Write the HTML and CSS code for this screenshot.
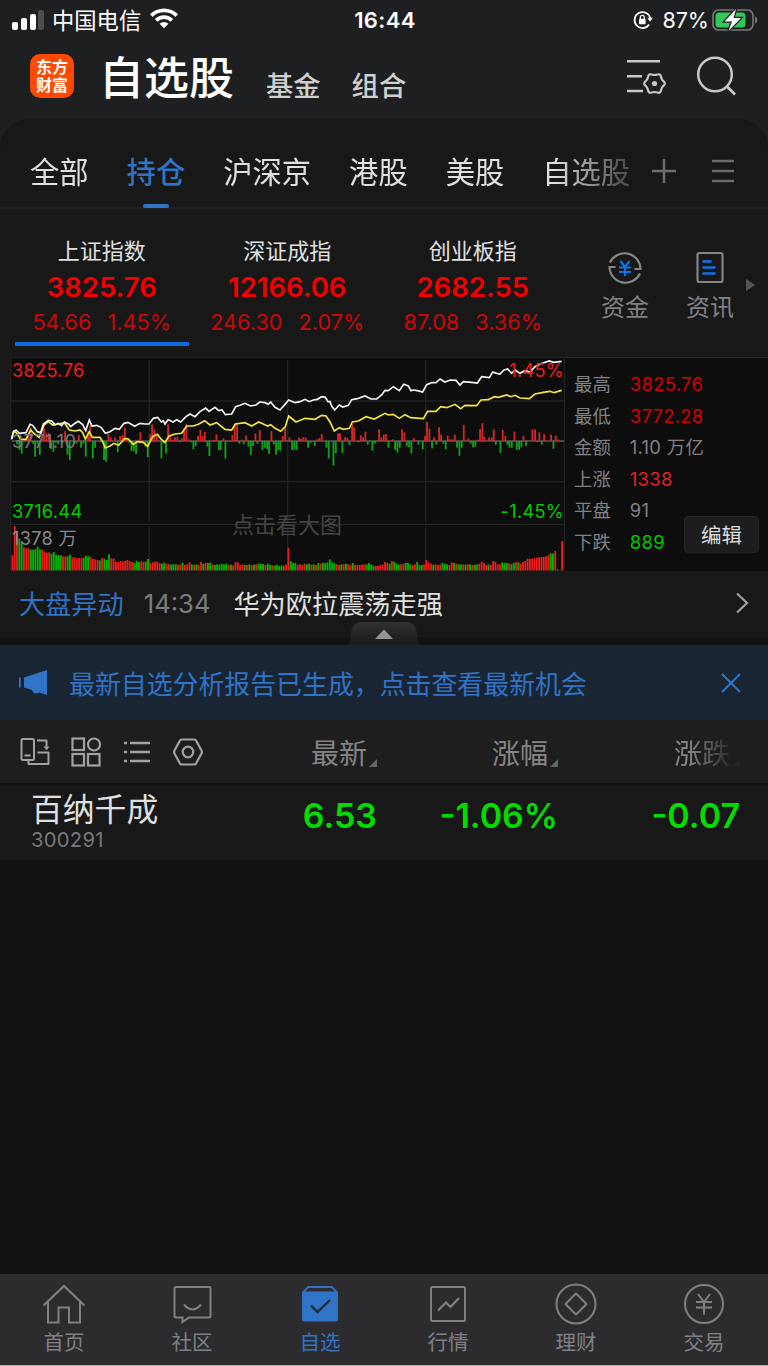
FILE: index.html
```html
<!DOCTYPE html>
<html lang="zh-CN">
<head>
    <meta charset="UTF-8">
    <meta name="viewport" content="width=device-width, initial-scale=1.0">
    <title>自选股</title>
    <link rel="stylesheet" href="styles.css">
</head>
<body>
    <!-- Status bar -->
    <div class="status-bar">
        <div class="status-left">
            <svg class="signal" width="32" height="20" viewBox="0 0 32 20">
                <rect x="0" y="12" width="6" height="8" rx="2" fill="#fff"/>
                <rect x="9" y="8" width="6" height="12" rx="2" fill="#fff"/>
                <rect x="18" y="4" width="6" height="16" rx="2" fill="#fff"/>
                <rect x="26" y="0" width="6" height="20" rx="2" fill="#4c4d4f"/>
            </svg>
            <span class="carrier">中国电信</span>
            <svg class="wifi" width="28" height="21" viewBox="0 0 28 21">
                <path d="M0 6.200a19.800 19.800 0 0 1 28 0l-2.600 2.700a16 16 0 0 0-22.800 0z" fill="#fff"/>
                <path d="M4.800 11a13 13 0 0 1 18.400 0l-2.700 2.700a9.200 9.200 0 0 0-13 0z" fill="#fff"/>
                <path d="M9.500 15.800a6.300 6.300 0 0 1 9 0L14 20.300z" fill="#fff"/>
            </svg>
        </div>
        <span class="clock">16:44</span>
        <div class="status-right">
            <svg width="20" height="20" viewBox="0 0 20 20">
                <path d="M16.200 14.600A8 8 0 1 1 17.300 8" fill="none" stroke="#fff" stroke-width="1.700"/>
                <path d="M14.300 7.800h5.500L17 11.800z" fill="#fff"/>
                <rect x="6" y="8.800" width="6.600" height="5.400" rx="1" fill="#fff"/>
                <path d="M7.300 9V7.300a2 2 0 0 1 4 0V9" fill="none" stroke="#fff" stroke-width="1.200"/>
            </svg>
            <span class="percent">87%</span>
            <svg width="46" height="24" viewBox="0 0 46 24">
                <rect x="1" y="2" width="40" height="20" rx="5.500" fill="none" stroke="#77787a" stroke-width="1.600"/>
                <path d="M43 8.500c3 1 3 6 0 7z" fill="#77787a"/>
                <rect x="3.500" y="4.500" width="30" height="15" rx="3.500" fill="#33c758"/>
                <path d="M24 1L12.500 13.500H20L16.500 23 29 10H21.500z" fill="#fff" stroke="#1e1f21" stroke-width="2.500" paint-order="stroke"/>
            </svg>
        </div>
    </div>

    <!-- App header -->
    <header class="header">
        <div class="logo"><span>东方</span><span>财富</span></div>
        <h1>自选股</h1>
        <span class="header-link">基金</span>
        <span class="header-link">组合</span>
        <svg class="header-settings" width="40" height="36" viewBox="0 0 40 36">
            <path d="M1 3.300h33M1 18.300h15M1 33h16" fill="none" stroke="#c8c8c8" stroke-width="2.500"/>
            <path transform="translate(0 2)" d="M37.700 25.500Q35.400 27.500 34.900 30.500 34.300 33.500 31.400 32.500 28.500 31.500 25.600 32.500 22.700 33.500 22.200 30.500 21.600 27.500 19.300 25.500 17 23.500 19.300 21.500 21.600 19.500 22.200 16.500 22.700 13.500 25.600 14.500 28.500 15.500 31.400 14.500 34.300 13.500 34.900 16.500 35.400 19.500 37.700 21.500 40 23.500 37.700 25.500z" fill="none" stroke="#c8c8c8" stroke-width="2.200"/>
            <circle cx="28.500" cy="25.500" r="2.600" fill="#c8c8c8"/>
        </svg>
        <svg class="header-search" width="42" height="42" viewBox="0 0 42 42">
            <circle cx="19" cy="18.500" r="16.800" fill="none" stroke="#c8c8c8" stroke-width="2.500"/>
            <path d="M31 30.500l8 8" stroke="#c8c8c8" stroke-width="2.800"/>
        </svg>
    </header>

    <main class="panel">
        <!-- Group tabs -->
        <nav class="tabs">
            <div class="tab-list">
                <span class="tab">全部</span>
                <span class="tab active">持仓</span>
                <span class="tab">沪深京</span>
                <span class="tab">港股</span>
                <span class="tab">美股</span>
                <span class="tab">自选股</span>
            </div>
            <svg width="26" height="26" viewBox="0 0 26 26"><path d="M13 2v24M1 14h24" stroke="#6b6b6b" stroke-width="2.500"/></svg>
            <svg class="tab-menu" width="24" height="26" viewBox="0 0 24 26"><path d="M1 4h22M1 14h22M1 24h22" stroke="#6b6b6b" stroke-width="2.500"/></svg>
        </nav>

        <!-- Market indices -->
        <section class="indices">
            <div class="index selected">
                <div class="index-name">上证指数</div>
                <div class="index-value">3825.76</div>
                <div class="index-change"><span>54.66</span><span>1.45%</span></div>
            </div>
            <div class="index">
                <div class="index-name">深证成指</div>
                <div class="index-value">12166.06</div>
                <div class="index-change"><span>246.30</span><span>2.07%</span></div>
            </div>
            <div class="index">
                <div class="index-name">创业板指</div>
                <div class="index-value">2682.55</div>
                <div class="index-change"><span>87.08</span><span>3.36%</span></div>
            </div>
            <div class="shortcut">
                <svg width="36" height="36" viewBox="0 0 36 36">
                    <path d="M3 12.500A16 16 0 0 1 33.500 19h-6M33 23.500A16 16 0 0 1 2.500 17h6" fill="none" stroke="#858585" stroke-width="2.200"/>
                    <path d="M13.500 11l4.500 6L22.500 11M18 16.500V26M12 17.500h12M12 22h12" fill="none" stroke="#0f72e5" stroke-width="2.100"/>
                </svg>
                <span>资金</span>
            </div>
            <div class="shortcut">
                <svg width="36" height="36" viewBox="0 0 36 36">
                    <rect x="5.500" y="3" width="25" height="29" rx="2" fill="none" stroke="#858585" stroke-width="2.200"/>
                    <path d="M10.500 11.500h9M10.500 17.500h13M10.500 23.500h13" stroke="#0f72e5" stroke-width="2.400"/>
                </svg>
                <span>资讯</span>
            </div>
            <span class="more-arrow"></span>
        </section>

        <!-- Intraday chart -->
        <section class="market">
            <div class="chart">
                <svg id="chart" viewBox="30 21 1665 642" preserveAspectRatio="none"></svg>
                <span class="label high">3825.76</span>
                <span class="label middle">3771.10</span>
                <span class="label low">3716.44</span>
                <span class="label volume">1378 万</span>
                <span class="label high-percent">1.45%</span>
                <span class="label low-percent">-1.45%</span>
                <span class="label hint">点击看大图</span>
            </div>
            <div class="stats">
                <div class="stat"><span>最高</span><b class="dark-red">3825.76</b></div>
                <div class="stat"><span>最低</span><b class="dark-red">3772.28</b></div>
                <div class="stat"><span>金额</span><b>1.10 万亿</b></div>
                <div class="stat"><span>上涨</span><b class="red">1338</b></div>
                <div class="stat"><span>平盘</span><b>91</b></div>
                <div class="stat"><span>下跌</span><b class="green">889</b></div>
                <button class="edit-button">编辑</button>
            </div>
        </section>

        <!-- News line -->
        <section class="news">
            <span class="news-tag">大盘异动</span>
            <span class="news-time">14:34</span>
            <span class="news-title">华为欧拉震荡走强</span>
            <svg width="14" height="22" viewBox="0 0 14 22"><path d="M2 1.500l10 9.500L2 20.500" fill="none" stroke="#a0a0a0" stroke-width="2.200"/></svg>
            <svg class="collapse" width="70" height="23" viewBox="0 0 70 23">
                <defs>
                    <linearGradient id="handle" x1="0" y1="0" x2="0" y2="1">
                        <stop offset="0" stop-color="#303030"/>
                        <stop offset="1" stop-color="#191919"/>
                    </linearGradient>
                </defs>
                <path d="M0 23Q2 18 2 11 3 0 13 0H57Q67 0 68 11 68 18 70 23z" fill="url(#handle)"/>
                <path d="M26 17L34 8.500q1-1 2 0L44 17z" fill="#969696"/>
            </svg>
        </section>

        <section class="banner">
            <svg width="29" height="26" viewBox="0 0 29 26">
                <path d="M.800 7.500v10" stroke="#2f74c6" stroke-width="1.800"/>
                <path d="M5 7.500L28 0v25l-8-2.500q-5 3-7-2.500l-3-1-5-1.500z" fill="#2f74c6"/>
            </svg>
            <span>最新自选分析报告已生成，点击查看最新机会</span>
            <svg class="banner-close" width="20" height="20" viewBox="0 0 20 20"><path d="M1 1l18 18M19 1L1 19" stroke="#2f74c6" stroke-width="2"/></svg>
        </section>

        <!-- Stock list -->
        <section class="stock-grid list-head">
            <div class="tools">
                <svg width="30" height="30" viewBox="0 0 30 30" fill="none" stroke="#a2a2a2" stroke-width="2">
                    <rect x="1.500" y="2" width="12.500" height="21" rx="1.500"/>
                    <path d="M4.500 18.500h6M17 3.500h9.500v9M8.500 23v4h20V15.500H17.500" stroke-linejoin="round"/>
                    <path d="M23.500 9.500l3 3.500 3-3.500" fill="#a2a2a2" stroke="none"/>
                </svg>
                <svg width="30" height="30" viewBox="0 0 30 30" fill="none" stroke="#a2a2a2" stroke-width="2.200">
                    <rect x="1.500" y="1.500" width="11.500" height="11.500"/>
                    <circle cx="23" cy="7.500" r="6"/>
                    <rect x="1.500" y="17" width="11.500" height="11.500"/>
                    <rect x="17" y="17" width="11.500" height="11.500"/>
                </svg>
                <svg width="30" height="30" viewBox="0 0 30 30" fill="none" stroke="#a2a2a2" stroke-width="2.500">
                    <path d="M2 6h3M8 6h20M2 15h3M8 15h20M2 24h3M8 24h20"/>
                </svg>
                <svg width="30" height="30" viewBox="0 0 30 30" fill="none" stroke="#a2a2a2" stroke-width="2.200" stroke-linejoin="round">
                    <path d="M8.500 2.500h13q1 0 1.500 1l5.500 10q.8 1.500 0 3L23 26.500q-.5 1-1.500 1h-13q-1 0-1.500-1l-5.500-10q-.8-1.500 0-3L7 3.500q.5-1 1.500-1z"/>
                    <circle cx="15" cy="15" r="5.300"/>
                </svg>
            </div>
            <div class="column-title">最新<i></i></div>
            <div class="column-title">涨幅<i></i></div>
            <div class="column-title faded">涨跌<i></i></div>
        </section>
        <section class="stock-grid stock">
            <div class="stock-name">
                <div class="name">百纳千成</div>
                <div class="code">300291</div>
            </div>
            <div class="number">6.53</div>
            <div class="number">-1.06%</div>
            <div class="number">-0.07</div>
        </section>
    </main>

    <!-- Bottom navigation -->
    <nav class="bottom-nav">
        <div class="nav-item">
            <svg width="44" height="44" viewBox="0 0 44 44"><path d="M1.500 23.500L22 4l20.500 19.500M6 20v20.500h10.500v-15h10.500v15H38V20" fill="none" stroke="#808085" stroke-width="2"/></svg>
            <span>首页</span>
        </div>
        <div class="nav-item">
            <svg width="44" height="44" viewBox="0 0 44 44"><path d="M6 5h33q1.500 0 1.500 1.500V34q0 1.500-1.500 1.500H19L12.500 40v-4.500H6q-1.500 0-1.500-1.500V6.500Q4.500 5 6 5zM14 22.500q8.500 10 17 0" fill="none" stroke="#808085" stroke-width="2"/></svg>
            <span>社区</span>
        </div>
        <div class="nav-item current">
            <svg width="44" height="44" viewBox="0 0 44 44">
                <path d="M10 4h24l6 6v27q0 2.500-2.500 2.500h-31Q4 39.500 4 37V10z" fill="#2f74c6"/>
                <path d="M10.500 6h23l3 3.500h-29z" fill="#2c2c2e"/>
                <path d="M13 23.500l6.500 6.500L32 18" fill="none" stroke="#202a38" stroke-width="2.400"/>
            </svg>
            <span>自选</span>
        </div>
        <div class="nav-item">
            <svg width="44" height="44" viewBox="0 0 44 44"><rect x="5" y="5" width="34" height="34" rx="1.500" fill="none" stroke="#808085" stroke-width="2"/><path d="M12 28.500l8-8 4.500 4.500L33 16" fill="none" stroke="#808085" stroke-width="2.200"/></svg>
            <span>行情</span>
        </div>
        <div class="nav-item">
            <svg width="44" height="44" viewBox="0 0 44 44"><circle cx="22" cy="22" r="19.500" fill="none" stroke="#808085" stroke-width="2"/><path d="M22 11.500L32.500 22 22 32.500 11.500 22z" fill="none" stroke="#808085" stroke-width="2" stroke-linejoin="round"/></svg>
            <span>理财</span>
        </div>
        <div class="nav-item">
            <svg width="44" height="44" viewBox="0 0 44 44"><circle cx="22" cy="22" r="19" fill="none" stroke="#808085" stroke-width="2"/><path d="M16 12l6 8 6-8M22 20v12.500M14 20h16M14 25.500h16" fill="none" stroke="#808085" stroke-width="2"/></svg>
            <span>交易</span>
        </div>
    </nav>
    <script src="script.js"></script>
</body>
</html>
```

FILE: styles.css
```css
* {
    box-sizing: border-box;
}
body {
    margin: 0;
    width: 768px;
    height: 1366px;
    overflow: hidden;
    display: flex;
    flex-direction: column;
    background-color: #1e1f21;
    color: #e0e0e0;
    font-family: Inter, "Noto Sans CJK SC", sans-serif;
    white-space: nowrap;
}
svg {
    display: block;
    flex-shrink: 0;
}

/* Status bar */
.status-bar {
    height: 39px;
    padding: 0 10px 0 12px;
    display: grid;
    grid-template-columns: 1fr auto 1fr;
    align-items: center;
    color: #fff;
}
.status-left, .status-right {
    display: flex;
    align-items: center;
}
.status-right {
    justify-content: flex-end;
}
.wifi {
    margin-bottom: 2px;
}
.carrier {
    margin: -2px 9px 0 8px;
    font-size: 22.3px;
}
.clock {
    font-size: 22px;
    font-weight: 600;
    letter-spacing: 0.4px;
}
.percent {
    margin: 0 3px 0 9px;
    font-size: 21.5px;
}

/* Header */
.header {
    height: 80px;
    padding: 1px 30px 0 30px;
    display: flex;
    align-items: flex-start;
}
.logo {
    width: 44px;
    height: 44px;
    margin-top: 14px;
    padding-top: 4px;
    border-radius: 10px;
    background-color: #ff4800;
    color: #fff;
    font-size: 16px;
    font-weight: 700;
    line-height: 18px;
    display: flex;
    flex-direction: column;
    align-items: center;
}
h1 {
    margin: 6px 32px 0 25px;
    font-size: 45px;
    font-weight: 500;
    line-height: 66px;
    color: #fff;
}
.header-link {
    margin: 25px 31px 0 0;
    font-size: 27.3px;
    font-weight: 500;
    line-height: 44px;
    color: #cfcfcf;
}
.header-settings {
    margin: 18px 30px 0 auto;
}
.header-search {
    margin-top: 16px;
}

/* Main panel */
.panel {
    flex: 1;
    border-radius: 30px 30px 0 0;
    background-color: #121212;
    overflow: hidden;
}
.tabs {
    height: 90px;
    padding: 14px 33px 0 30px;
    display: flex;
    align-items: center;
    background-color: #181818;
    border-bottom: 2px solid #222;
}
.tab-list {
    width: 603px;
    height: 76px;
    margin-right: 18px;
    display: flex;
    gap: 38px;
    -webkit-mask-image: linear-gradient(to right, #000 87%, rgba(0, 0, 0, 0.3) 98%);
    mask-image: linear-gradient(to right, #000 87%, rgba(0, 0, 0, 0.3) 98%);
}
.tab {
    flex-shrink: 0;
    font-size: 29.3px;
    line-height: 81px;
}
.tab.active {
    display: flex;
    flex-direction: column;
    align-items: center;
    color: #2f74c6;
    font-weight: 500;
}
.tab.active::after {
    content: "";
    width: 26px;
    height: 4px;
    margin-top: -9px;
    border-radius: 2px;
    background-color: #2f74c6;
}
.tab-menu {
    margin-left: 34px;
}

/* Indices */
.indices {
    height: 148px;
    padding-left: 9px;
    display: flex;
    background-color: #181818;
}
.index {
    width: 185.500px;
    padding: 26px 6px 0;
    display: flex;
    flex-direction: column;
    align-items: center;
}
.index-name {
    font-size: 22px;
    line-height: 32px;
}
.index-value {
    margin-top: 2px;
    font-size: 27.5px;
    font-weight: 600;
    line-height: 36px;
    color: #f00000;
}
.index-change {
    margin-top: 1px;
    display: flex;
    gap: 16px;
    font-size: 21.7px;
    line-height: 32px;
    color: #c90808;
}
.index.selected::after {
    content: "";
    align-self: stretch;
    height: 4px;
    margin-top: 4px;
    background-color: #0f6fe0;
}
.shortcut {
    width: 85px;
    padding-top: 41px;
    display: flex;
    flex-direction: column;
    align-items: center;
    font-size: 24px;
    line-height: 43px;
    color: #808085;
}
.shortcut:nth-of-type(4) {
    margin-left: 17px;
}
.more-arrow {
    margin: 70px 0 0 -7px;
    height: 12px;
    border: 6px solid transparent;
    border-left: 9px solid #555;
    border-right: 0;
}

/* Chart */
.market {
    height: 214px;
    padding-left: 10px;
    display: flex;
    background-color: #181818;
}
.chart {
    position: relative;
    width: 555px;
    height: 214px;
    background-color: #0d0d0d;
}
.chart svg {
    width: 555px;
    height: 214px;
}
.label {
    position: absolute;
    font-size: 18.2px;
    line-height: 24px;
    letter-spacing: 0.3px;
}
.high {
    left: 2px;
    top: 1px;
    color: #ee1c1c;
}
.middle {
    left: 2px;
    top: 72px;
    color: #77787c;
}
.low {
    left: 2px;
    top: 142px;
    color: #00cc00;
}
.volume {
    left: 2px;
    top: 169px;
    color: #88888c;
}
.high-percent {
    right: 1px;
    top: 1px;
    color: #ee1c1c;
}
.low-percent {
    right: 1px;
    top: 142px;
    color: #00cc00;
}
.hint {
    left: 222px;
    top: 153px;
    font-size: 22px;
    line-height: 30px;
    letter-spacing: 0;
    color: #444446;
}
.stats {
    position: relative;
    flex: 1;
    padding: 11px 0 0 9px;
    background-color: #0d0d0d;
    border-top: 1px solid #292929;
}
.stat {
    display: flex;
    gap: 19px;
    font-size: 18.4px;
    line-height: 31.600px;
    color: #808085;
}
.stat b {
    font-weight: 400;
    letter-spacing: 0.3px;
}
.stat .dark-red {
    color: #d40000;
}
.stat .red {
    color: #e02020;
}
.stat .green {
    color: #00c400;
}
.edit-button {
    position: absolute;
    right: 9px;
    bottom: 18px;
    width: 75px;
    height: 37px;
    padding: 0 0 2px;
    border: 1px solid #242424;
    border-radius: 4px;
    background-color: #1d1d1d;
    color: #ddd;
    font-family: inherit;
    font-size: 20.500px;
}

/* News */
.news {
    position: relative;
    height: 74px;
    padding: 0 19px 2px;
    display: flex;
    align-items: center;
    font-size: 26.200px;
    background-color: #181818;
    border-bottom: 8px solid #121212;
}
.news-tag {
    color: #2f74c6;
}
.news-time {
    margin: 0 23px 0 20px;
    font-size: 25.6px;
    color: #7c7c80;
}
.news-title {
    margin-right: auto;
}
.collapse {
    position: absolute;
    left: 349px;
    top: 51px;
}
.banner {
    height: 75px;
    padding: 0 27px 0 19px;
    display: flex;
    align-items: center;
    font-size: 25.900px;
    background-color: #1a2533;
    color: #2f74c6;
}
.banner span {
    margin: 0 0 0 21px;
}
.banner-close {
    margin-left: auto;
}

/* Stock list */
.stock-grid {
    display: grid;
    grid-template-columns: 196px 181px 181px 182px;
}
.list-head {
    height: 65px;
    align-items: center;
    background-color: #1e1e1e;
    border-bottom: 2px solid #121212;
}
.tools {
    display: flex;
    gap: 21px;
    padding-left: 20px;
}
.column-title {
    padding-top: 5px;
    display: flex;
    justify-content: flex-end;
    align-items: flex-end;
    gap: 2px;
    font-size: 28px;
    line-height: 44px;
    color: #858585;
}
.column-title i {
    margin-bottom: 9px;
    border: 4px solid #666;
    border-top-color: transparent;
    border-left-color: transparent;
}
.faded {
    -webkit-mask-image: linear-gradient(to right, #000 72%, rgba(0, 0, 0, 0.1) 96%);
    mask-image: linear-gradient(to right, #000 72%, rgba(0, 0, 0, 0.1) 96%);
}
.stock {
    height: 75px;
    background-color: #181818;
}
.stock-name {
    padding: 8px 0 0 31px;
}
.name {
    font-size: 31.800px;
    line-height: 34px;
}
.code {
    padding-top: 3px;
    font-size: 20.2px;
    line-height: 20px;
    color: #77777b;
    letter-spacing: 0.3px;
}
.number {
    text-align: right;
    font-size: 34px;
    font-weight: 600;
    line-height: 62px;
    color: #00dc00;
}

/* Bottom navigation */
.bottom-nav {
    height: 92px;
    display: flex;
    background-color: #2c2c2e;
    border-bottom: 1px solid #b5b5b5;
}
.nav-item {
    flex: 1;
    padding-top: 8px;
    display: flex;
    flex-direction: column;
    align-items: center;
    font-size: 20.500px;
    line-height: 34px;
    color: #808085;
}
.nav-item.current {
    color: #2f74c6;
}
```

FILE: script.js
```js
const AXIS = 273;
const BASE = 661;
const LEFT = 37;
const STEP = 6.9;

// price line, x,y
const price = "35,268 40,245 48,240 58,250 78,248 90,223 98,226 112,245 122,248 130,222 145,211 155,213 165,224 175,220 185,227 193,216 205,222 212,230 222,222 235,214 248,224 257,242 268,210 276,228 290,226 303,232 316,250 330,245 345,235 358,238 372,220 384,217 404,229 420,220 435,222 447,222 460,205 473,202 484,216 490,212 495,222 504,209 520,216 530,209 542,216 558,200 570,192 585,200 600,185 617,174 627,184 645,172 656,182 666,180 676,194 695,192 707,170 720,166 735,160 752,168 768,165 779,156 795,158 805,163 812,156 825,172 840,180 855,163 866,150 885,158 900,155 915,148 928,155 940,150 952,148 965,140 976,142 984,155 990,155 995,168 1004,180 1018,165 1028,171 1045,166 1055,149 1072,146 1095,138 1113,147 1130,147 1145,135 1155,121 1165,122 1180,110 1198,122 1211,103 1225,108 1233,122 1241,120 1252,122 1268,126 1280,104 1295,98 1308,98 1320,87 1335,96 1350,90 1368,91 1380,105 1390,95 1415,97 1432,99 1445,80 1468,83 1478,66 1490,70 1500,72 1512,60 1523,57 1535,70 1545,60 1560,70 1575,62 1590,66 1605,50 1620,42 1648,33 1660,37 1685,34";

// average line
const average = "35,265 42,243 50,250 62,268 78,268 92,240 104,252 118,262 132,225 145,215 158,225 175,222 193,218 208,240 225,243 240,240 248,248 256,267 268,245 277,262 300,262 308,275 316,294 330,288 342,280 356,286 374,265 385,267 400,283 412,275 430,277 443,289 458,260 472,253 484,268 495,277 507,258 525,252 545,250 560,228 580,228 595,223 614,212 630,225 650,218 675,238 695,240 706,222 735,218 755,228 776,216 790,222 803,228 812,224 825,235 842,244 856,230 866,198 888,216 915,205 945,208 965,196 978,198 990,216 1003,243 1018,233 1030,238 1048,235 1057,216 1075,213 1098,200 1123,207 1155,190 1165,195 1180,193 1198,205 1215,194 1232,203 1270,206 1283,184 1308,184 1322,170 1340,173 1365,163 1382,176 1395,166 1430,167 1443,150 1465,149 1483,140 1495,142 1520,135 1533,140 1545,136 1560,144 1588,146 1605,132 1630,127 1650,124 1662,128 1685,121";

// [x, height], positive is up
const momentum = [
    [51,-10],[58,-27],[65,-38],[72,-4],[78,8],[85,16],[92,40],[99,-8],[105,-47],[112,-8],[119,-41],[126,6],[132,38],[139,23],[146,23],[153,-24],[160,-32],[167,-5],[174,-9],[188,-4],[195,30],[202,-41],[209,-57],[222,-6],[229,-8],[236,18],[243,-20],[250,-8],[257,-47],[264,30],[270,48],[278,-52],[285,-20],[300,-4],[312,-57],[318,-62],[325,21],[332,11],[345,11],[353,-34],[360,15],[367,18],[374,40],[381,8],[387,-5],[394,-30],[401,-30],[408,-39],[415,4],[421,27],[436,-17],[443,-49],[450,20],[456,50],[463,35],[470,15],[484,-52],[491,-8],[498,-37],[504,50],[511,18],[518,3],[525,11],[532,12],[539,-4],[545,8],[552,38],[559,51],[566,5],[573,-4],[580,-25],[587,-15],[594,15],[601,33],[608,15],[614,27],[622,-17],[628,-45],[642,3],[649,20],[656,-27],[662,-27],[670,8],[676,-53],[690,-3],[697,18],[704,48],[711,51],[718,-8],[725,4],[731,-10],[738,17],[745,-17],[752,-42],[759,-15],[766,23],[772,-8],[779,33],[787,-27],[794,-20],[801,-24],[807,-39],[814,30],[821,-10],[828,-41],[835,-27],[841,-29],[848,15],[855,40],[868,11],[876,-27],[883,-27],[890,-27],[897,11],[903,7],[910,12],[917,10],[924,-20],[931,-6],[944,-15],[951,5],[958,9],[965,21],[979,-20],[986,-52],[1000,-74],[1007,-37],[1014,23],[1020,23],[1027,-36],[1035,12],[1042,10],[1048,-12],[1056,51],[1062,41],[1075,-4],[1082,17],[1089,11],[1096,28],[1103,-11],[1117,-29],[1124,-8],[1137,35],[1144,11],[1151,19],[1158,21],[1165,-20],[1178,5],[1185,-27],[1192,-35],[1199,-20],[1206,35],[1213,26],[1220,-15],[1227,-19],[1234,-38],[1241,9],[1255,-11],[1268,-25],[1275,15],[1281,57],[1288,37],[1296,-22],[1302,11],[1309,-11],[1317,41],[1323,19],[1330,-8],[1337,-25],[1343,16],[1350,5],[1357,5],[1364,19],[1371,-20],[1378,-44],[1385,-20],[1391,48],[1405,8],[1412,-8],[1419,-19],[1426,-17],[1433,4],[1440,35],[1447,53],[1453,13],[1467,11],[1475,11],[1481,35],[1487,-11],[1501,-36],[1508,33],[1516,16],[1522,-11],[1528,-20],[1535,-20],[1543,28],[1550,-26],[1557,-26],[1564,-19],[1570,16],[1578,-15],[1597,35],[1605,35],[1611,-3],[1618,26],[1625,-11],[1632,21],[1653,19],[1660,-23],[1667,16],[1674,5]
];

// one volume bar per minute, negative is green
const volume = [
    45,133,115,-95,-81,69,66,66,-62,-62,-64,-71,-62,62,55,53,54,-50,-55,-46,-46,-46,42,42,-42,-47,38,40,36,37,37,-38,-44,-42,40,34,33,31,-30,36,-35,-31,-48,36,35,26,25,28,27,28,31,28,25,-22,-29,-25,27,25,-26,-34,22,24,26,26,22,-20,-23,20,18,-17,-18,-18,17,18,-23,16,18,24,-18,16,-18,16,25,-20,22,-22,-23,18,-16,-18,-17,-19,-18,-20,17,-17,15,24,24,16,18,-16,16,-18,16,-17,18,-20,-20,-19,16,-20,-16,15,-14,-17,-13,-14,14,18,
    68,-28,-22,-22,17,18,16,20,-18,-20,17,-18,16,-22,20,-22,-22,-24,-33,-24,-21,18,16,-18,18,-20,18,17,-22,17,16,16,17,18,-18,-22,-18,-13,13,14,16,17,25,22,-20,28,-26,-20,-17,18,20,-22,-22,-18,16,18,-25,-16,-16,18,31,24,20,-17,18,16,18,-22,-20,-18,16,24,-22,20,-18,-18,18,-17,18,-18,16,-17,-17,20,26,22,16,-17,16,28,26,18,18,-24,-22,-22,21,-18,-22,25,-24,20,25,28,35,35,35,36,38,39,40,40,42,45,-51,-50,58,-3,0,88
];

let shapes = "";

// grid
const grid = [[31, 22, 1694, 22], [31, 153, 1692, 153], [31, 395, 1692, 395], [31, 523, 1692, 523], [31, 661, 1692, 661], [32, 22, 32, 661], [1693, 22, 1693, 661]];
[448, 863, 1277].forEach(x => {
    grid.push([x, 30, x, 516], [x, 530, x, 661]);
});
grid.forEach(g => {
    shapes += `<line x1="${g[0]}" y1="${g[1]}" x2="${g[2]}" y2="${g[3]}" stroke="#222222" stroke-width="4"/>`;
});

shapes += `<line x1="35" y1="${AXIS}" x2="1692" y2="${AXIS}" stroke="#808080" stroke-width="3"/>`;

momentum.forEach(m => {
    const top = m[1] > 0 ? AXIS - m[1] : AXIS;
    shapes += `<rect x="${m[0] - 2.5}" y="${top}" width="5.5" height="${Math.abs(m[1])}" fill="${m[1] > 0 ? "#cf2828" : "#14a01a"}"/>`;
});

volume.forEach((v, i) => {
    const h = Math.abs(v);
    shapes += `<rect x="${LEFT + i * STEP - 2.5}" y="${BASE - h}" width="5.5" height="${h}" fill="${v > 0 ? "#ee1c1c" : "#00b800"}"/>`;
});

shapes += `<polyline points="${average}" fill="none" stroke="#f2e63c" stroke-width="5"/>`;
shapes += `<polyline points="${price}" fill="none" stroke="#f4f4f4" stroke-width="5"/>`;

document.getElementById("chart").innerHTML = shapes;
```
